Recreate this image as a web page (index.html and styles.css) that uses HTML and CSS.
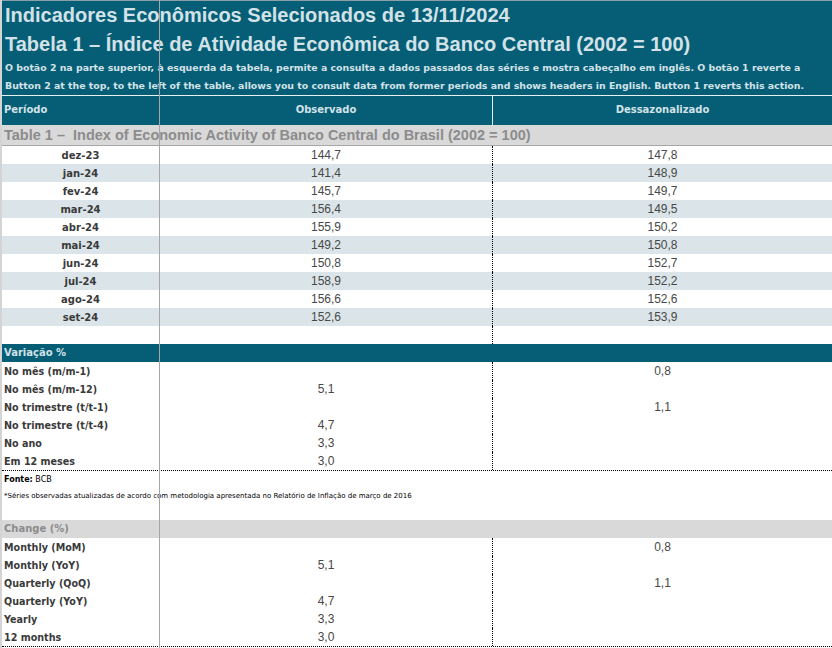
FILE: index.html
```html
<!DOCTYPE html>
<html lang="pt-BR">
<head>
<meta charset="utf-8">
<title>Indicadores Econômicos Selecionados</title>
<link rel="stylesheet" href="styles.css">
</head>
<body>
<div class="sheet">
  <header class="banner">
    <h1 class="title">Indicadores Econômicos Selecionados de 13/11/2024</h1>
    <h2 class="title">Tabela 1 – Índice de Atividade Econômica do Banco Central (2002 = 100)</h2>
    <p class="intro">O botão 2 na parte superior, à esquerda da tabela, permite a consulta a dados passados das séries e mostra cabeçalho em inglês. O botão 1 reverte a</p>
    <p class="intro">Button 2 at the top, to the left of the table, allows you to consult data from former periods and shows headers in English. Button 1 reverts this action.</p>
  </header>

  <div class="row head">
    <div class="c1">Período</div>
    <div class="c2">Observado</div>
    <div class="c3">Dessazonalizado</div>
  </div>

  <div class="band band-en">Table 1 –&nbsp; Index of Economic Activity of Banco Central do Brasil (2002 = 100)</div>

  <div class="row data"><div class="c1 per">dez-23</div><div class="c2 val">144,7</div><div class="c3 val">147,8</div></div>
  <div class="row data alt"><div class="c1 per">jan-24</div><div class="c2 val">141,4</div><div class="c3 val">148,9</div></div>
  <div class="row data"><div class="c1 per">fev-24</div><div class="c2 val">145,7</div><div class="c3 val">149,7</div></div>
  <div class="row data alt"><div class="c1 per">mar-24</div><div class="c2 val">156,4</div><div class="c3 val">149,5</div></div>
  <div class="row data sel"><div class="c1 per">abr-24</div><div class="c2 val">155,9</div><div class="c3 val">150,2</div></div>
  <div class="row data alt"><div class="c1 per">mai-24</div><div class="c2 val">149,2</div><div class="c3 val">150,8</div></div>
  <div class="row data"><div class="c1 per">jun-24</div><div class="c2 val">150,8</div><div class="c3 val">152,7</div></div>
  <div class="row data alt"><div class="c1 per">jul-24</div><div class="c2 val">158,9</div><div class="c3 val">152,2</div></div>
  <div class="row data"><div class="c1 per">ago-24</div><div class="c2 val">156,6</div><div class="c3 val">152,6</div></div>
  <div class="row data alt"><div class="c1 per">set-24</div><div class="c2 val">152,6</div><div class="c3 val">153,9</div></div>
  <div class="row data"><div class="c1"></div><div class="c2"></div><div class="c3"></div></div>

  <div class="band band-teal">Variação %</div>

  <div class="row data"><div class="c1 lbl">No mês (m/m-1)</div><div class="c2 val"></div><div class="c3 val">0,8</div></div>
  <div class="row data"><div class="c1 lbl">No mês (m/m-12)</div><div class="c2 val">5,1</div><div class="c3 val"></div></div>
  <div class="row data"><div class="c1 lbl">No trimestre (t/t-1)</div><div class="c2 val"></div><div class="c3 val">1,1</div></div>
  <div class="row data"><div class="c1 lbl">No trimestre (t/t-4)</div><div class="c2 val">4,7</div><div class="c3 val"></div></div>
  <div class="row data"><div class="c1 lbl">No ano</div><div class="c2 val">3,3</div><div class="c3 val"></div></div>
  <div class="row data last"><div class="c1 lbl">Em 12 meses</div><div class="c2 val">3,0</div><div class="c3 val"></div></div>

  <div class="notes">
    <p class="source"><b>Fonte:</b> BCB</p>
    <p class="footnote">*Séries observadas atualizadas de acordo com metodologia apresentada no Relatório de Inflação de março de 2016</p>
  </div>

  <div class="band band-change">Change (%)</div>

  <div class="row data"><div class="c1 lbl">Monthly (MoM)</div><div class="c2 val"></div><div class="c3 val">0,8</div></div>
  <div class="row data"><div class="c1 lbl">Monthly (YoY)</div><div class="c2 val">5,1</div><div class="c3 val"></div></div>
  <div class="row data"><div class="c1 lbl">Quarterly (QoQ)</div><div class="c2 val"></div><div class="c3 val">1,1</div></div>
  <div class="row data"><div class="c1 lbl">Quarterly (YoY)</div><div class="c2 val">4,7</div><div class="c3 val"></div></div>
  <div class="row data"><div class="c1 lbl">Yearly</div><div class="c2 val">3,3</div><div class="c3 val"></div></div>
  <div class="row data last"><div class="c1 lbl">12 months</div><div class="c2 val">3,0</div><div class="c3 val"></div></div>

  <div class="freeze"></div>
</div>
</body>
</html>
```

FILE: styles.css
```css
html, body {
  margin: 0;
  padding: 0;
  background: #ffffff;
  overflow: hidden;
}

.sheet {
  position: relative;
  width: 832px;
  height: 648px;
  overflow: hidden;
  background: #ffffff;
  border-left: 2px solid #d4d4d4;
  box-sizing: border-box;
  font-family: "DejaVu Sans", "Liberation Sans", sans-serif;
}

.banner {
  background: #055e75;
  color: #d3e2e8;
  border-top: 1px solid #8aa0a8;
  border-bottom: 1px solid #e8f0f2;
  padding: 0 0 0 3px;
}

.title {
  margin: 0;
  font-family: "Liberation Sans", Arial, sans-serif;
  font-weight: bold;
  font-size: 20px;
  line-height: 29px;
  height: 29px;
  white-space: nowrap;
}

.intro {
  margin: 0;
  font-size: 9.4px;
  font-weight: bold;
  line-height: 18px;
  height: 18px;
  white-space: nowrap;
}

.row {
  display: grid;
  grid-template-columns: 158px 333px 1fr;
  height: 18px;
}

.row > div {
  box-sizing: border-box;
  line-height: 19px;
  white-space: nowrap;
  overflow: hidden;
}

.row .c1 {
  border-right: 1px solid #a6a6a6;
}

.row .c2 {
  border-right: 1px dotted #000000;
}

.head {
  height: 29px;
  background: #055e75;
  color: #d3e2e8;
  font-size: 10px;
  font-weight: bold;
}

.head > div {
  line-height: 28px;
}

.head .c1 {
  padding-left: 2px;
  border-right: 1px solid #e8f0f2;
}

.head .c2 {
  text-align: center;
  border-right: 1px solid #e8f0f2;
}

.head .c3 {
  text-align: center;
}

.band {
  font-weight: bold;
  white-space: nowrap;
  padding-left: 2px;
}

.band-en {
  background: #d9d9d9;
  color: #8c8c8c;
  font-family: "Liberation Sans", Arial, sans-serif;
  font-size: 14.5px;
  height: 20px;
  line-height: 20px;
  border-bottom: 1px solid #a6a6a6;
}

.band-teal {
  background: #055e75;
  color: #d3e2e8;
  font-size: 10px;
  height: 18px;
  line-height: 18px;
}

.band-change {
  background: #d9d9d9;
  color: #8c8c8c;
  font-size: 10px;
  height: 18px;
  line-height: 18px;
}

.data.alt {
  background: #dbe5e9;
}

.data.sel {
  box-shadow: inset 2px 0 0 #217346;
  margin-left: -2px;
  padding-left: 2px;
}

.data.last {
  border-bottom: 1px dotted #000000;
  height: 18px;
  box-sizing: content-box;
}

.per {
  text-align: center;
  color: #3a3a3a;
  font-size: 10px;
  font-weight: bold;
}

.lbl {
  color: #3a3a3a;
  font-size: 9.6px;
  font-weight: bold;
  padding-left: 2px;
}

.val {
  text-align: center;
  color: #484848;
  font-family: "Liberation Sans Narrow", "Liberation Sans", Arial, sans-serif;
  font-size: 12px;
}

.notes {
  height: 49px;
  padding-left: 2px;
  color: #000000;
}

.source {
  margin: 0;
  font-size: 8px;
  line-height: 17px;
  height: 17px;
}

.footnote {
  margin: 0;
  font-size: 7px;
  line-height: 17px;
  height: 17px;
  white-space: nowrap;
}

.freeze {
  position: absolute;
  top: 0;
  bottom: 0;
  left: 157px;
  width: 1px;
  background: #a6a6a6;
}
```
